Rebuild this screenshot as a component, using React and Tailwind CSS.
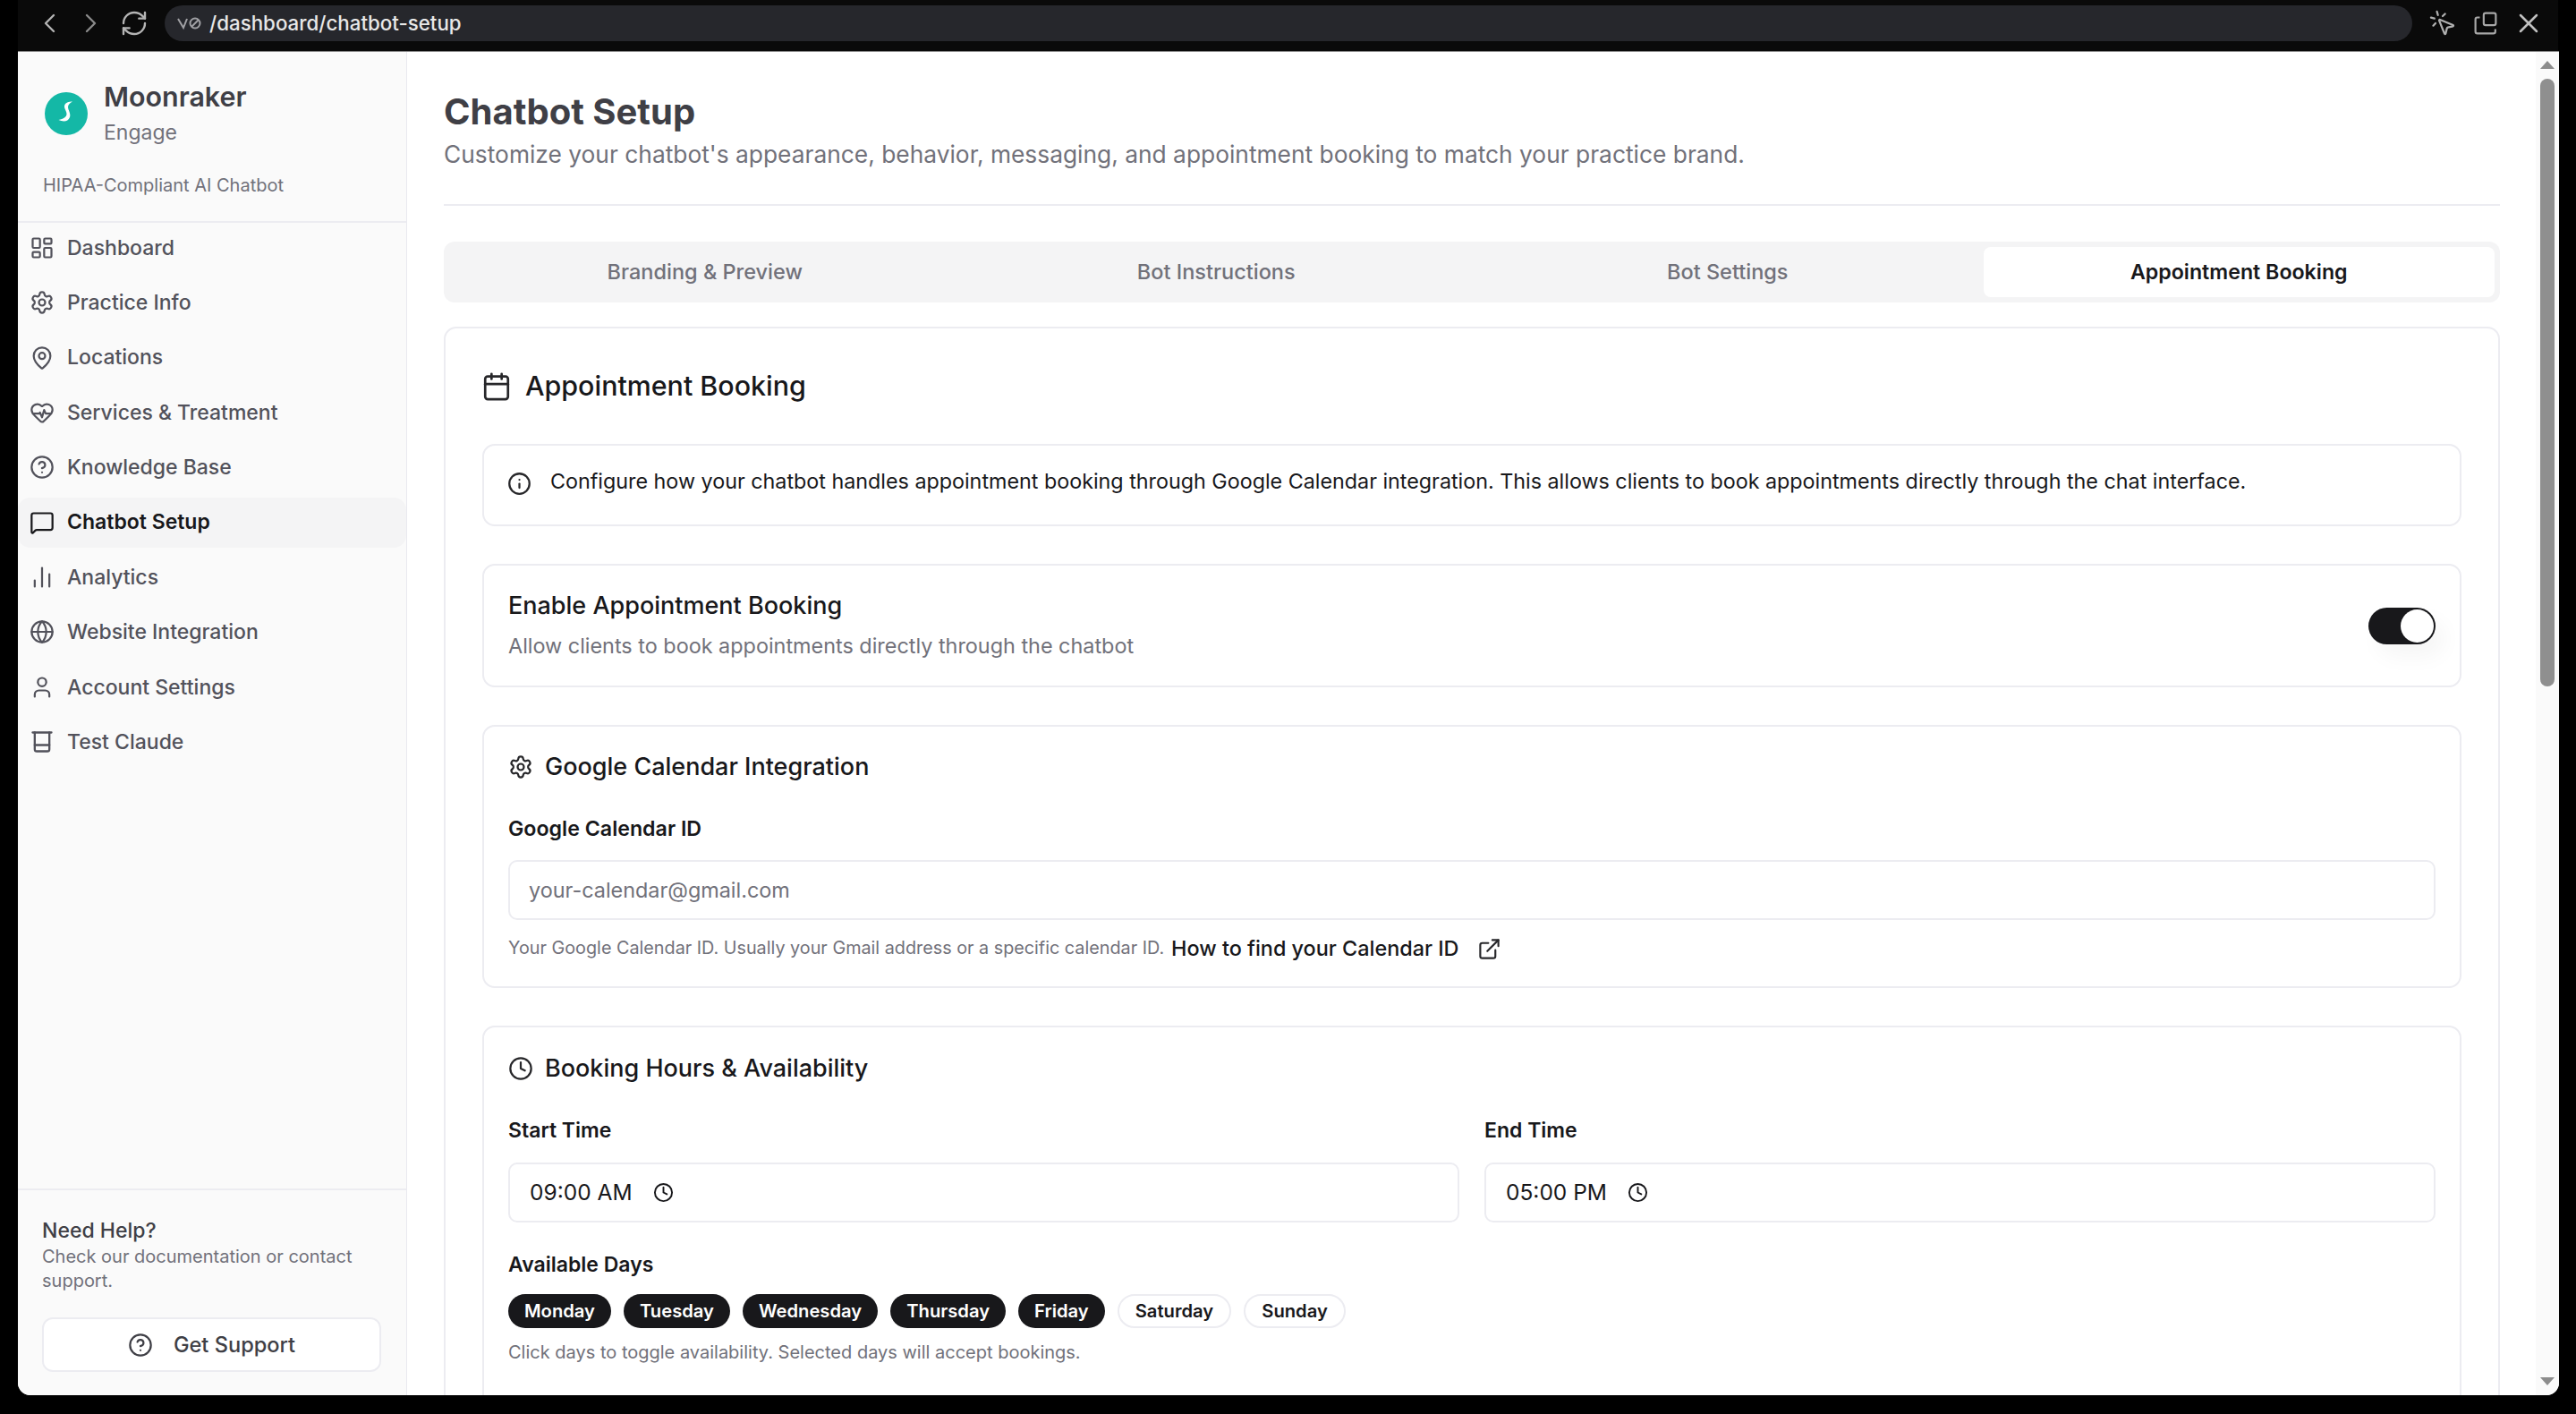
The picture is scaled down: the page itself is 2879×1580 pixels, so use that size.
import {
  Calendar,
  ChartNoAxesColumn,
  CircleHelp,
  Clock,
  ExternalLink,
  Globe,
  HeartPulse,
  Info,
  LayoutDashboard,
  MapPin,
  MessageSquare,
  MousePointerClick,
  RefreshCw,
  Settings,
  User,
  X,
} from "lucide-react";

const TestIcon = ({ className }) => (
  <svg className={className} viewBox="0 0 24 24" fill="none" stroke="currentColor" strokeWidth="2" strokeLinecap="round" strokeLinejoin="round">
    <path d="M19 3v16a2 2 0 0 1-2 2H7a2 2 0 0 1-2-2V3" />
    <path d="M3 3h18" />
    <path d="M5 15h14" />
  </svg>
);

const navItems = [
  { label: "Dashboard", icon: LayoutDashboard },
  { label: "Practice Info", icon: Settings },
  { label: "Locations", icon: MapPin },
  { label: "Services & Treatment", icon: HeartPulse },
  { label: "Knowledge Base", icon: CircleHelp },
  { label: "Chatbot Setup", icon: MessageSquare, active: true },
  { label: "Analytics", icon: ChartNoAxesColumn },
  { label: "Website Integration", icon: Globe },
  { label: "Account Settings", icon: User },
  { label: "Test Claude", icon: TestIcon },
];

const tabs = ["Branding & Preview", "Bot Instructions", "Bot Settings", "Appointment Booking"];

const days = [
  { label: "Monday", on: true },
  { label: "Tuesday", on: true },
  { label: "Wednesday", on: true },
  { label: "Thursday", on: true },
  { label: "Friday", on: true },
  { label: "Saturday", on: false },
  { label: "Sunday", on: false },
];

const BrowserBar = () => (
  <div className="h-[57px] shrink-0 mx-[20px] pb-[5px] flex items-center bg-[#0a0a0a] text-[#b4b4b4]">
    <svg className="w-[14px] h-[22px] ml-[28px]" viewBox="0 0 14 22" fill="none" stroke="currentColor" strokeWidth="2.4" strokeLinecap="round" strokeLinejoin="round">
      <path d="M12 2L3 11l9 9" />
    </svg>
    <svg className="w-[14px] h-[22px] ml-[33px] text-[#8a8a8a]" viewBox="0 0 14 22" fill="none" stroke="currentColor" strokeWidth="2.4" strokeLinecap="round" strokeLinejoin="round">
      <path d="M2 2l9 9-9 9" />
    </svg>
    <RefreshCw className="w-[32px] h-[32px] ml-[25px]" strokeWidth={1.8} />
    <div className="ml-[18px] w-[2512px] h-[40px] rounded-full bg-[#26272c] flex items-center pl-[14px]">
      <svg className="w-[28px] h-[16px] text-[#a0a0a4]" viewBox="0 0 28 16" fill="none" stroke="currentColor" strokeWidth="2">
        <path d="M1 3l6 10 4-10" />
        <circle cx="20" cy="8" r="5.5" />
        <path d="M16 12l8-8" />
      </svg>
      <span className="ml-[8px] text-[22.3px] font-medium text-[#e8e8e8]">/dashboard/chatbot-setup</span>
    </div>
    <MousePointerClick className="w-[32px] h-[32px] ml-[18px] text-[#b0b0b0]" strokeWidth={1.7} />
    <svg className="w-[26px] h-[26px] ml-[19px] text-[#a8a8a8]" viewBox="0 0 24 24" fill="none" stroke="currentColor" strokeWidth="2" strokeLinejoin="round">
      <rect x="10" y="1.5" width="12.5" height="12.5" rx="2" />
      <path d="M6 6H3.5a2 2 0 0 0-2 2v12.5a2 2 0 0 0 2 2H20a2 2 0 0 0 2-2V18" />
    </svg>
    <X className="w-[36px] h-[36px] ml-[17px] text-[#c0c0c0]" strokeWidth={1.7} />
  </div>
);

const Sidebar = () => (
  <aside className="w-[435px] shrink-0 flex flex-col bg-[#fafafa] border-r border-[#e9e9ef]">
    <div className="h-[191px] shrink-0 border-b-2 border-[#ececf1] pl-[30px] pt-[30px]">
      <div className="flex items-center gap-[18px]">
        <div className="w-[48px] h-[48px] rounded-full bg-[#14b8a6]">
          <svg className="w-[48px] h-[48px]" viewBox="0 0 48 48" fill="none">
            <path d="M31 10.5C27 10.5 22.5 11.5 22 15.5C21.7 18.5 24.5 21 24.5 24.5C24.5 27.5 21 30 15.5 31C20 33 26 33.5 28 28C29.5 24 26 20 26 16.5C26 14 28 12 31 10.5Z" fill="#ffffff" />
          </svg>
        </div>
        <div>
          <div className="text-[30.4px] leading-[40px] font-semibold text-[#3f3f46]">Moonraker</div>
          <div className="mt-[2px] text-[23px] leading-[36px] text-[#71717a]">Engage</div>
        </div>
      </div>
      <div className="-ml-[2px] mt-[27px] text-[20px] leading-[28px] text-[#71717a]">HIPAA-Compliant AI Chatbot</div>
    </div>
    <nav className="flex-1 flex flex-col gap-[5.35px]">
      {navItems.map(({ label, icon: Icon, active }) => (
        <div
          key={label}
          className={`h-[56px] flex items-center gap-[14px] pl-[13px] rounded-[14px] text-[23px] ${
            active ? "bg-[#f4f4f5] text-[#18181b] font-semibold" : "text-[#52525b] font-medium"
          }`}
        >
          <Icon className="w-[28px] h-[28px]" strokeWidth={1.9} />
          <span>{label}</span>
        </div>
      ))}
    </nav>
    <div className="h-[231px] shrink-0 border-t-2 border-[#ececf1] px-[27px] pt-[29px]">
      <div className="text-[23px] leading-[32px] font-medium text-[#3f3f46]">Need Help?</div>
      <div className="text-[20px] leading-[27px] text-[#71717a]">Check our documentation or contact support.</div>
      <button className="mt-[27px] w-[379px] h-[61px] rounded-[12px] bg-white border-2 border-[#ececf1] flex items-center justify-center gap-[23px] text-[23.6px] font-medium text-[#3f3f46]">
        <CircleHelp className="w-[28px] h-[28px]" strokeWidth={1.9} />
        Get Support
      </button>
    </div>
  </aside>
);

const Box = ({ className, children }) => (
  <div className={`border-2 border-[#ececf1] rounded-[14px] bg-white ${className}`}>{children}</div>
);

const SectionTitle = ({ icon: Icon, children }) => (
  <div className="flex items-center gap-[13px] h-[40px]">
    <Icon className="w-[28px] h-[28px] text-[#27272a]" strokeWidth={1.9} />
    <span className="text-[27px] font-medium text-[#18181b]">{children}</span>
  </div>
);

const TimeField = ({ label, value }) => (
  <div className="flex-1">
    <div className="text-[23px] leading-[32px] font-semibold text-[#18181b]">{label}</div>
    <div className="mt-[20px] h-[67px] border-2 border-[#ececf1] rounded-[10px] flex items-center pl-[22px] gap-[23px] text-[24.5px] text-[#18181b]">
      {value}
      <Clock className="w-[23px] h-[23px]" strokeWidth={2} />
    </div>
  </div>
);

const Content = () => (
  <main className="flex-1 min-w-0 overflow-hidden bg-white pl-[41px] pr-[40px] pt-[45px]">
    <h1 className="text-[40px] leading-[44px] font-bold text-[#3f3f46]">Chatbot Setup</h1>
    <p className="mt-[7px] text-[26.35px] leading-[36px] text-[#71717a]">
      Customize your chatbot's appearance, behavior, messaging, and appointment booking to match your practice brand.
    </p>
    <div className="mt-[38px] border-t-2 border-[#ececf1]" />
    <div className="mt-[40px] h-[68px] rounded-[12px] bg-[#f4f4f5] p-[6px] grid grid-cols-4">
      {tabs.map((tab, i) => (
        <div
          key={tab}
          className={`flex items-center justify-center rounded-[8px] font-medium ${
            i === 3 ? "bg-white text-[#18181b] font-semibold text-[23.2px]" : "text-[#71717a] text-[23.5px]"
          }`}
        >
          {tab}
        </div>
      ))}
    </div>
    <Box className="mt-[27px] px-[41px] pt-[44px] pb-[80px]">
      <div className="flex items-center gap-[15px] h-[42px] -ml-[1px]">
        <Calendar className="w-[34px] h-[34px] text-[#27272a]" strokeWidth={1.9} />
        <h2 className="text-[30.4px] font-medium text-[#18181b]">Appointment Booking</h2>
      </div>
      <Box className="mt-[43px] h-[92px] flex items-start pt-[21px] pl-[26px] gap-[21px] text-[23.3px] leading-[38px] text-[#18181b]">
        <Info className="w-[27px] h-[27px] mt-[8px] shrink-0 text-[#27272a]" strokeWidth={2} />
        Configure how your chatbot handles appointment booking through Google Calendar integration. This allows clients to book appointments directly through the chat interface.
      </Box>
      <Box className="mt-[42px] h-[138px] flex items-center justify-between pl-[27px] pr-[27px]">
        <div>
          <div className="-mt-[1px] text-[27px] leading-[40px] font-medium text-[#18181b]">Enable Appointment Booking</div>
          <div className="mt-[7px] text-[23.4px] leading-[36px] text-[#71717a]">Allow clients to book appointments directly through the chatbot</div>
        </div>
        <div className="w-[75px] h-[41px] rounded-full bg-[#18181b] flex items-center justify-end pr-[2px] shadow-[10px_14px_24px_rgba(0,0,0,0.04)]">
          <div className="w-[37px] h-[37px] rounded-full bg-white" />
        </div>
      </Box>
      <Box className="mt-[42px] h-[294px] px-[27px] pt-[25px]">
        <SectionTitle icon={Settings}>Google Calendar Integration</SectionTitle>
        <label className="block mt-[33px] text-[23.2px] leading-[32px] font-semibold text-[#18181b]">Google Calendar ID</label>
        <input
          className="mt-[19px] block w-full h-[67px] border-2 border-[#ececf1] rounded-[10px] px-[21px] text-[23.4px] outline-none placeholder:text-[#71717a]"
          placeholder="your-calendar@gmail.com"
        />
        <div className="mt-[16px] flex items-center h-[32px]">
          <span className="text-[19.8px] text-[#71717a]">Your Google Calendar ID. Usually your Gmail address or a specific calendar ID.</span>
          <span className="ml-[8px] text-[23.4px] font-medium text-[#18181b]">How to find your Calendar ID</span>
          <ExternalLink className="ml-[20px] w-[27px] h-[27px] text-[#27272a]" strokeWidth={1.9} />
        </div>
      </Box>
      <Box className="mt-[42px] px-[27px] pt-[26px] pb-[80px]">
        <SectionTitle icon={Clock}>Booking Hours & Availability</SectionTitle>
        <div className="mt-[33px] flex gap-[28px]">
          <TimeField label="Start Time" value="09:00 AM" />
          <TimeField label="End Time" value="05:00 PM" />
        </div>
        <div className="mt-[31px] text-[23px] leading-[32px] font-semibold text-[#18181b]">Available Days</div>
        <div className="mt-[17px] flex gap-[14px]">
          {days.map((day) => (
            <div
              key={day.label}
              className={`h-[38px] px-[18px] rounded-full flex items-center text-[20.2px] font-semibold ${
                day.on ? "bg-[#18181b] text-white" : "bg-white border-2 border-[#ececf1] text-[#18181b]"
              }`}
            >
              {day.label}
            </div>
          ))}
        </div>
        <div className="mt-[13px] text-[20px] leading-[28px] text-[#71717a]">Click days to toggle availability. Selected days will accept bookings.</div>
      </Box>
    </Box>
  </main>
);

const ScrollBar = () => (
  <div className="w-[26px] shrink-0 bg-[#fafafa] flex flex-col items-center pt-[10px] pb-[11px]">
    <div className="w-0 h-0 border-x-[8px] border-x-transparent border-b-[9px] border-b-[#8c8c8c]" />
    <div className="mt-[11px] w-[16px] h-[679px] rounded-full bg-[#8f8f8f]" />
    <div className="mt-auto w-0 h-0 border-x-[8px] border-x-transparent border-t-[9px] border-t-[#8c8c8c]" />
  </div>
);

export default function App() {
  return (
    <div className="w-full h-[1580px] bg-black flex flex-col overflow-hidden font-['Inter',sans-serif]">
      <BrowserBar />
      <div className="h-[1502px] mx-[20px] w-[2840px] flex overflow-hidden rounded-b-[14px] bg-white border-t border-[#8a8a8a]">
        <Sidebar />
        <Content />
        <ScrollBar />
      </div>
    </div>
  );
}
